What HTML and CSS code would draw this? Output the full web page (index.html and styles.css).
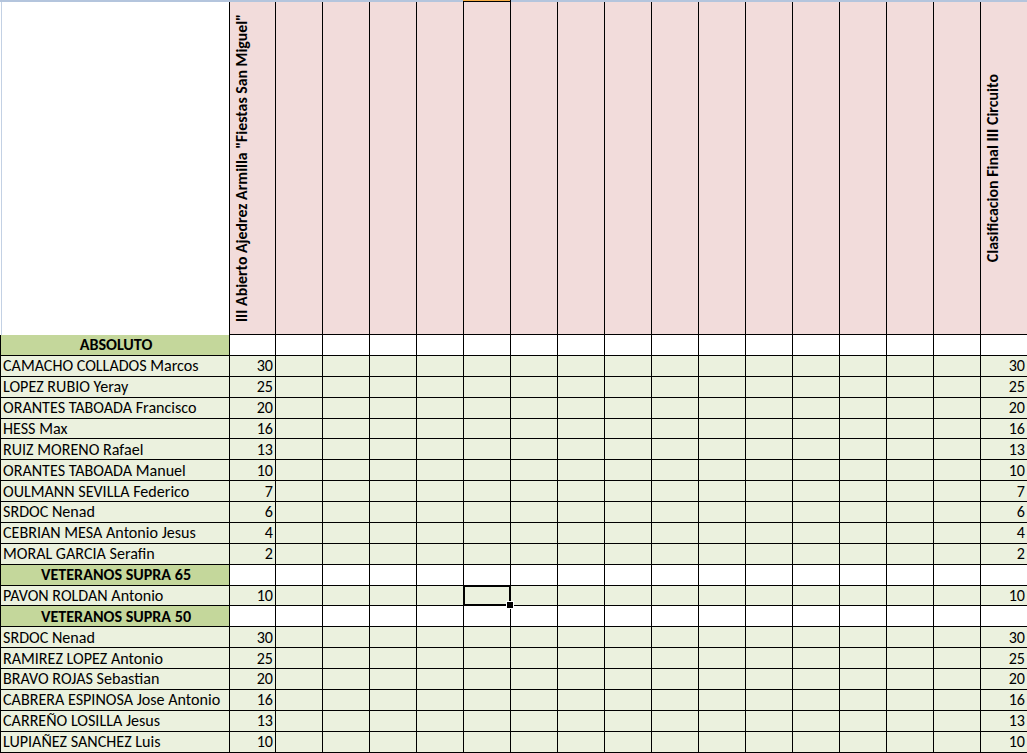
FILE: index.html
```html
<!DOCTYPE html>
<html lang="es">
<head>
<meta charset="utf-8">
<title>Clasificación III Circuito</title>
<link rel="stylesheet" href="styles.css">
</head>
<body>
<div class="sheet">
  <div class="row topbar"><span class="hi"></span></div>

  <div class="row head">
    <div class="corner"></div>
    <div class="hcell"><span class="vtext first">III Abierto Ajedrez Armilla "Fiestas San Miguel"</span></div>
    <div class="hcell"></div><div class="hcell"></div><div class="hcell"></div><div class="hcell"></div><div class="hcell"></div>
    <div class="hcell"></div><div class="hcell"></div><div class="hcell"></div><div class="hcell"></div><div class="hcell"></div>
    <div class="hcell"></div><div class="hcell"></div><div class="hcell"></div><div class="hcell"></div><div class="hcell"></div>
    <div class="hcell"><span class="vtext last">Clasificacion Final III Circuito</span></div>
  </div>

  <div class="row group"><div class="name">ABSOLUTO</div><span></span><span></span><span></span><span></span><span></span><span></span><span></span><span></span><span></span><span></span><span></span><span></span><span></span><span></span><span></span><span></span><span></span></div>

  <div class="row data"><div class="name">CAMACHO COLLADOS Marcos</div><span class="num">30</span><span></span><span></span><span></span><span></span><span></span><span></span><span></span><span></span><span></span><span></span><span></span><span></span><span></span><span></span><span></span><span class="num">30</span></div>
  <div class="row data"><div class="name">LOPEZ RUBIO Yeray</div><span class="num">25</span><span></span><span></span><span></span><span></span><span></span><span></span><span></span><span></span><span></span><span></span><span></span><span></span><span></span><span></span><span></span><span class="num">25</span></div>
  <div class="row data"><div class="name">ORANTES TABOADA Francisco</div><span class="num">20</span><span></span><span></span><span></span><span></span><span></span><span></span><span></span><span></span><span></span><span></span><span></span><span></span><span></span><span></span><span></span><span class="num">20</span></div>
  <div class="row data"><div class="name">HESS Max</div><span class="num">16</span><span></span><span></span><span></span><span></span><span></span><span></span><span></span><span></span><span></span><span></span><span></span><span></span><span></span><span></span><span></span><span class="num">16</span></div>
  <div class="row data"><div class="name">RUIZ MORENO Rafael</div><span class="num">13</span><span></span><span></span><span></span><span></span><span></span><span></span><span></span><span></span><span></span><span></span><span></span><span></span><span></span><span></span><span></span><span class="num">13</span></div>
  <div class="row data"><div class="name">ORANTES TABOADA Manuel</div><span class="num">10</span><span></span><span></span><span></span><span></span><span></span><span></span><span></span><span></span><span></span><span></span><span></span><span></span><span></span><span></span><span></span><span class="num">10</span></div>
  <div class="row data"><div class="name">OULMANN SEVILLA Federico</div><span class="num">7</span><span></span><span></span><span></span><span></span><span></span><span></span><span></span><span></span><span></span><span></span><span></span><span></span><span></span><span></span><span></span><span class="num">7</span></div>
  <div class="row data"><div class="name">SRDOC Nenad</div><span class="num">6</span><span></span><span></span><span></span><span></span><span></span><span></span><span></span><span></span><span></span><span></span><span></span><span></span><span></span><span></span><span></span><span class="num">6</span></div>
  <div class="row data"><div class="name">CEBRIAN MESA Antonio Jesus</div><span class="num">4</span><span></span><span></span><span></span><span></span><span></span><span></span><span></span><span></span><span></span><span></span><span></span><span></span><span></span><span></span><span></span><span class="num">4</span></div>
  <div class="row data"><div class="name">MORAL GARCIA Serafin</div><span class="num">2</span><span></span><span></span><span></span><span></span><span></span><span></span><span></span><span></span><span></span><span></span><span></span><span></span><span></span><span></span><span></span><span class="num">2</span></div>

  <div class="row group"><div class="name">VETERANOS SUPRA 65</div><span></span><span></span><span></span><span></span><span></span><span></span><span></span><span></span><span></span><span></span><span></span><span></span><span></span><span></span><span></span><span></span><span></span></div>

  <div class="row data"><div class="name">PAVON ROLDAN Antonio</div><span class="num">10</span><span></span><span></span><span></span><span></span><span class="sel"></span><span></span><span></span><span></span><span></span><span></span><span></span><span></span><span></span><span></span><span></span><span class="num">10</span></div>

  <div class="row group"><div class="name">VETERANOS SUPRA 50</div><span></span><span></span><span></span><span></span><span></span><span></span><span></span><span></span><span></span><span></span><span></span><span></span><span></span><span></span><span></span><span></span><span></span></div>

  <div class="row data"><div class="name">SRDOC Nenad</div><span class="num">30</span><span></span><span></span><span></span><span></span><span></span><span></span><span></span><span></span><span></span><span></span><span></span><span></span><span></span><span></span><span></span><span class="num">30</span></div>
  <div class="row data"><div class="name">RAMIREZ LOPEZ Antonio</div><span class="num">25</span><span></span><span></span><span></span><span></span><span></span><span></span><span></span><span></span><span></span><span></span><span></span><span></span><span></span><span></span><span></span><span class="num">25</span></div>
  <div class="row data"><div class="name">BRAVO ROJAS Sebastian</div><span class="num">20</span><span></span><span></span><span></span><span></span><span></span><span></span><span></span><span></span><span></span><span></span><span></span><span></span><span></span><span></span><span></span><span class="num">20</span></div>
  <div class="row data"><div class="name">CABRERA ESPINOSA Jose Antonio</div><span class="num">16</span><span></span><span></span><span></span><span></span><span></span><span></span><span></span><span></span><span></span><span></span><span></span><span></span><span></span><span></span><span></span><span class="num">16</span></div>
  <div class="row data"><div class="name">CARREÑO LOSILLA Jesus</div><span class="num">13</span><span></span><span></span><span></span><span></span><span></span><span></span><span></span><span></span><span></span><span></span><span></span><span></span><span></span><span></span><span></span><span class="num">13</span></div>
  <div class="row data"><div class="name">LUPIAÑEZ SANCHEZ Luis</div><span class="num">10</span><span></span><span></span><span></span><span></span><span></span><span></span><span></span><span></span><span></span><span></span><span></span><span></span><span></span><span></span><span></span><span class="num">10</span></div>
</div>
</body>
</html>
```

FILE: styles.css
```css
* {
  box-sizing: border-box;
  margin: 0;
  padding: 0;
}

html,
body {
  width: 1027px;
  height: 753px;
  overflow: hidden;
  background: #ffffff;
}

body {
  font-family: Carlito, Calibri, Lato, "Liberation Sans", sans-serif;
  font-size: 16.1px;
  color: #000000;
}

.sheet {
  width: 1028px;
}

.row {
  display: grid;
  grid-template-columns: 230px 46px repeat(16, 47px);
}

/* column header strip */
.topbar {
  height: 2px;
  background: #b4c5dd;
}

.topbar .hi {
  grid-column: 7;
  margin-left: -1px;
  background: #f6ad46;
}

/* tall header row */
.head {
  height: 333px;
}

.head .corner {
  border-right: 1px solid #000;
  background: linear-gradient(to right, #ffffff 1px, #c3d1e4 1px, #c3d1e4 2px, #ffffff 2px);
}

.hcell {
  background: #f2dcdb;
  border-right: 1px solid #000;
  border-bottom: 1px solid #000;
  display: flex;
  align-items: center;
  justify-content: flex-start;
  padding-left: 3px;
  overflow: hidden;
}

.vtext {
  writing-mode: vertical-rl;
  transform: rotate(180deg);
  font-weight: bold;
  font-size: 16px;
  white-space: nowrap;
  line-height: 18px;
}

.vtext.first {
  font-size: 15.8px;
}

/* body rows */
.data,
.group {
  height: 20.88px;
}

.row > .name,
.row > span {
  border-right: 1px solid #000;
  border-bottom: 1px solid #000;
  display: flex;
  align-items: center;
  white-space: nowrap;
  overflow: hidden;
  line-height: 18px;
  padding-top: 1px;
}

.row > .name {
  border-left: 1px solid #000;
  padding-left: 2px;
}

.data > .name,
.data > span {
  background: #ebf1de;
}

.group > .name {
  background: #c4d79b;
  font-weight: bold;
  justify-content: center;
}

.group > span {
  background: #ffffff;
}

.num {
  justify-content: flex-end;
  padding-right: 2px;
}

/* active cell */
.sel {
  position: relative;
  overflow: visible !important;
}

.sel::before {
  content: "";
  position: absolute;
  left: -1px;
  top: -1px;
  right: -1px;
  bottom: -1px;
  border: 2px solid #000;
}

.sel::after {
  content: "";
  position: absolute;
  right: -4px;
  bottom: -4px;
  width: 6px;
  height: 6px;
  background: #000;
  border: 1px solid #fff;
}
```
